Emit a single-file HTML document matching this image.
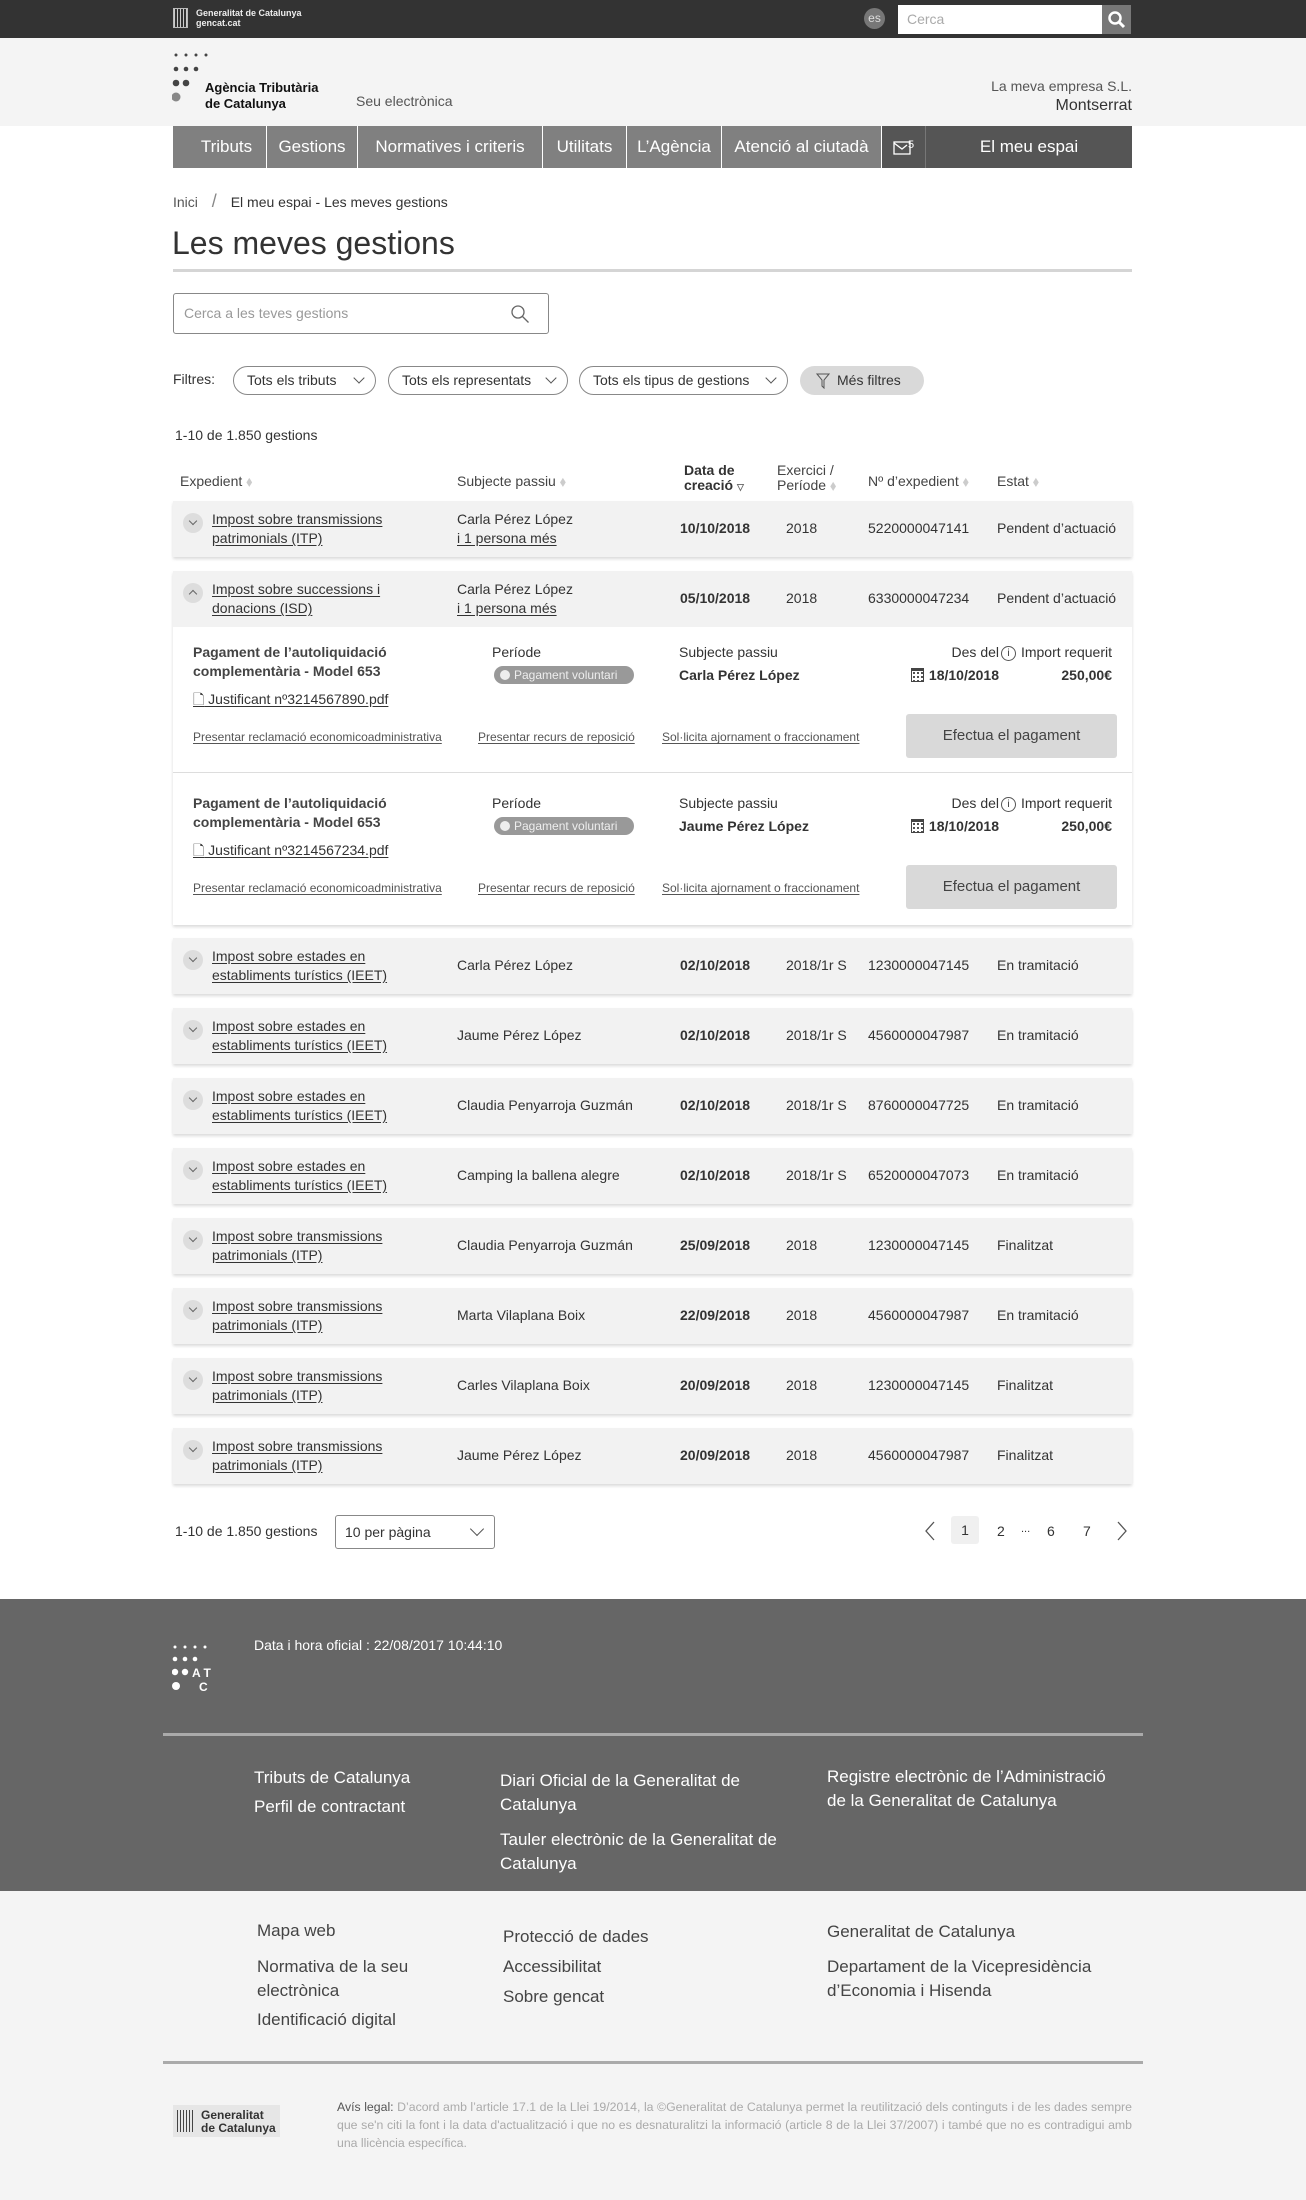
<!DOCTYPE html>
<html><head><meta charset="utf-8"><style>
*{box-sizing:border-box;margin:0;padding:0}
body{width:1306px;height:2200px;font-family:"Liberation Sans",sans-serif;color:#333;background:#fff;position:relative;overflow:hidden;font-size:14px}
.abs{position:absolute}
.top{left:0;top:0;width:1306px;height:38px;background:#333}
.hdr{left:0;top:38px;width:1306px;height:88px;background:#f4f4f4}
.nav{left:173px;top:126px;width:959px;height:42px;background:#808080;color:#fff;font-size:17px}
.nav div{position:absolute;top:0;border-right:1px solid #fff;height:42px;line-height:42px;text-align:center}
.u{text-decoration:underline;text-underline-offset:2px}
.row{position:absolute;left:173px;width:959px;height:56px;background:#f2f2f2;box-shadow:0 2px 3px rgba(0,0,0,.15);font-size:14px}
.row .c{position:absolute}
.chev{position:absolute;left:10px;top:12px;width:20px;height:20px;border-radius:50%;background:#ddd}
.chev:after{content:"";position:absolute;left:7px;top:5px;width:5px;height:5px;border-right:1px solid #666;border-bottom:1px solid #666;transform:rotate(45deg)}
.chev.up:after{top:8px;transform:rotate(-135deg)}
.pill{position:absolute;top:366px;height:29px;border:1px solid #888;border-radius:15px;font-size:14px;line-height:27px;padding:0 30px 0 13px}
.pill:after{content:"";position:absolute;right:12px;top:7px;width:7px;height:7px;border-right:1px solid #555;border-bottom:1px solid #555;transform:rotate(45deg)}
.th{position:absolute;font-size:14px;color:#444}
.det{position:absolute;left:173px;width:959px;background:#fff}
.btn{position:absolute;left:733px;width:211px;height:44px;background:#d9d9d9;border-radius:3px;text-align:center;line-height:44px;font-size:15px;color:#444}
.small{font-size:12px;color:#555}
.fl{color:#fff;font-size:17px;line-height:24px}
.ll{color:#444;font-size:17px;line-height:24px}
.cal{display:inline-block;width:13px;height:14px;border:1.3px solid #444;border-top-width:3px;margin-right:5px;vertical-align:-2px;background:radial-gradient(circle,#444 1px,transparent 1.2px) 0 0/4px 4px}
.info{display:inline-block;width:15px;height:15px;border:1px solid #555;border-radius:50%;font-size:10px;line-height:13px;text-align:center;margin-right:5px;vertical-align:1px}
</style></head><body>
<div class="abs top">
 <div class="abs" style="left:173px;top:8px;width:15px;height:20px;border:1px solid #bbb;background:repeating-linear-gradient(90deg,#ccc 0 1px,#333 1px 3px)"></div>
 <div class="abs" style="left:196px;top:8px;color:#eee;font-size:9px;line-height:10px;font-weight:bold">Generalitat de Catalunya<br>gencat.cat</div>
 <div class="abs" style="left:864px;top:8px;width:21px;height:21px;border-radius:50%;background:#777;color:#ddd;font-size:12px;text-align:center;line-height:21px">es</div>
 <div class="abs" style="left:898px;top:5px;width:204px;height:29px;background:#fff;color:#aaa;font-size:14px;line-height:29px;padding-left:9px">Cerca</div>
 <div class="abs" style="left:1102px;top:5px;width:29px;height:29px;background:#777"><svg width="29" height="29"><circle cx="13" cy="13" r="5.5" stroke="#fff" stroke-width="2.5" fill="none"/><path d="M17 17l5 5" stroke="#fff" stroke-width="3"/></svg></div>
</div>
<div class="abs hdr">
 <svg class="abs" style="left:172px;top:14px" width="40" height="60"><g fill="#444"><circle cx="4" cy="3" r="1.5"/><circle cx="14" cy="3" r="1.5"/><circle cx="24" cy="3" r="1.5"/><circle cx="34" cy="3" r="1.5"/><circle cx="4" cy="17" r="2.3"/><circle cx="14" cy="17" r="2.3"/><circle cx="24" cy="17" r="2.3"/><circle cx="4" cy="31" r="3.3"/><circle cx="14" cy="31" r="3.3"/><circle cx="4" cy="45" r="4.5" fill="#888"/></g></svg>
 <div class="abs" style="left:205px;top:42px;font-size:13px;font-weight:bold;line-height:16px;color:#111">Agència Tributària<br>de Catalunya</div>
 <div class="abs" style="left:356px;top:55px;font-size:14px;color:#555">Seu electrònica</div>
 <div class="abs" style="right:174px;top:39px;font-size:14px;color:#555;text-align:right;line-height:19px">La meva empresa S.L.<br><span style="font-size:16px;color:#333">Montserrat</span></div>
</div>
<div class="abs nav">
 <div style="left:0;width:94px;padding-left:14px">Tributs</div>
 <div style="left:94px;width:91px">Gestions</div>
 <div style="left:185px;width:185px">Normatives i criteris</div>
 <div style="left:370px;width:84px">Utilitats</div>
 <div style="left:454px;width:95px">L’Agència</div>
 <div style="left:549px;width:160px">Atenció al ciutadà</div>
 <div style="left:709px;width:44px;background:#555;border-right:1px solid #777"><svg style="position:absolute;left:11px;top:12px" width="24" height="18"><rect x="1" y="4" width="16" height="12" fill="none" stroke="#fff" stroke-width="1.3"/><path d="M1 5l8 6 5-4" stroke="#fff" fill="none" stroke-width="1.3"/><text x="15" y="10" fill="#fff" font-size="11" font-family="Liberation Sans">5</text></svg></div>
 <div style="left:753px;width:206px;background:#555;border:none">El meu espai</div>
</div>
<div class="abs" style="left:173px;top:191px;font-size:14px;color:#555">Inici <span style="margin:0 10px;font-size:18px;color:#888">/</span> <span style="color:#333">El meu espai - Les meves gestions</span></div>
<div class="abs" style="left:172px;top:225px;font-size:32px;color:#333">Les meves gestions</div>
<div class="abs" style="left:173px;top:269px;width:959px;height:3px;background:#d5d5d5"></div>
<div class="abs" style="left:173px;top:293px;width:376px;height:41px;border:1px solid #888;border-radius:3px;color:#999;font-size:14px;line-height:39px;padding-left:10px">Cerca a les teves gestions
 <svg style="position:absolute;right:18px;top:10px" width="20" height="20"><circle cx="8" cy="8" r="6" stroke="#666" fill="none" stroke-width="1.3"/><path d="M12.5 12.5l6 6" stroke="#666" stroke-width="1.3"/></svg></div>
<div class="abs" style="left:173px;top:371px;font-size:14px">Filtres:</div>
<div class="pill" style="left:233px;width:143px">Tots els tributs</div>
<div class="pill" style="left:388px;width:180px">Tots els representats</div>
<div class="pill" style="left:579px;width:209px">Tots els tipus de gestions</div>
<div class="abs" style="left:800px;top:366px;width:124px;height:29px;border-radius:15px;background:#d9d9d9;font-size:14px;line-height:29px;padding-left:37px">Més filtres<svg style="position:absolute;left:16px;top:7px" width="14" height="16"><path d="M1 1h12l-5 6v8l-2-2V7z" fill="none" stroke="#555"/></svg></div>
<div class="abs" style="left:175px;top:427px;font-size:14px">1-10 de 1.850 gestions</div>

<div class="th" style="left:180px;top:473px">Expedient <span style="color:#ccc">⬧</span></div>
<div class="th" style="left:457px;top:473px">Subjecte passiu <span style="color:#ccc">⬧</span></div>
<div class="th" style="left:684px;top:463px;font-weight:bold;color:#333;line-height:15px">Data de<br>creació <span style="font-size:9px;color:#666">▽</span></div>
<div class="th" style="left:777px;top:463px;line-height:15px">Exercici /<br>Període <span style="color:#ccc">⬧</span></div>
<div class="th" style="left:868px;top:473px">Nº d’expedient <span style="color:#ccc">⬧</span></div>
<div class="th" style="left:997px;top:473px">Estat <span style="color:#ccc">⬧</span></div>

<div class="row" style="top:501px"><div class="chev"></div>
 <div class="c u" style="left:39px;top:9px;line-height:19px">Impost sobre transmissions<br>patrimonials (ITP)</div>
 <div class="c" style="left:284px;top:9px;line-height:19px">Carla Pérez López<br><span class="u">i 1 persona més</span></div>
 <div class="c" style="left:507px;top:19px;font-weight:bold">10/10/2018</div><div class="c" style="left:613px;top:19px">2018</div><div class="c" style="left:695px;top:19px">5220000047141</div><div class="c" style="left:824px;top:19px">Pendent d’actuació</div></div>

<div class="abs" style="left:173px;top:571px;width:959px;height:354px;box-shadow:0 2px 3px rgba(0,0,0,.15);background:#fff"></div>
<div class="row" style="top:571px;box-shadow:none"><div class="chev up"></div>
 <div class="c u" style="left:39px;top:9px;line-height:19px">Impost sobre successions i<br>donacions (ISD)</div>
 <div class="c" style="left:284px;top:9px;line-height:19px">Carla Pérez López<br><span class="u">i 1 persona més</span></div>
 <div class="c" style="left:507px;top:19px;font-weight:bold">05/10/2018</div><div class="c" style="left:613px;top:19px">2018</div><div class="c" style="left:695px;top:19px">6330000047234</div><div class="c" style="left:824px;top:19px">Pendent d’actuació</div></div>

<div class="det" style="top:627px;height:146px;border-bottom:1px solid #ddd">
 <div class="abs" style="left:20px;top:16px;font-weight:bold;font-size:14px;line-height:19px;color:#444">Pagament de l’autoliquidació<br>complementària - Model 653</div>
 <div class="abs u" style="left:20px;top:62px;font-size:14px"><span style="text-decoration:none">🗋</span> Justificant nº3214567890.pdf</div>
 <div class="abs" style="left:319px;top:17px">Període</div>
 <div class="abs" style="left:321px;top:39px;height:18px;width:140px;border-radius:9px;background:#999;color:#eee;font-size:12px;line-height:18px;padding-left:20px">Pagament voluntari<span style="position:absolute;left:6px;top:4px;width:10px;height:10px;border-radius:50%;background:#eee"></span></div>
 <div class="abs" style="left:506px;top:17px">Subjecte passiu</div>
 <div class="abs" style="left:506px;top:40px;font-weight:bold">Carla Pérez López</div>
 <div class="abs" style="right:133px;top:17px">Des del</div>
 <div class="abs" style="right:133px;top:40px;font-weight:bold"><span class="cal"></span>18/10/2018</div>
 <div class="abs" style="right:20px;top:17px"><span class="info">i</span>Import requerit</div>
 <div class="abs" style="right:20px;top:40px;font-weight:bold">250,00€</div>
 <div class="abs small u" style="left:20px;top:103px">Presentar reclamació economicoadministrativa</div>
 <div class="abs small u" style="left:305px;top:103px">Presentar recurs de reposició</div>
 <div class="abs small u" style="left:489px;top:103px">Sol·licita ajornament o fraccionament</div>
 <div class="btn" style="top:87px">Efectua el pagament</div>
</div>
<div class="det" style="top:774px;height:151px">
 <div class="abs" style="left:20px;top:20px;font-weight:bold;font-size:14px;line-height:19px;color:#444">Pagament de l’autoliquidació<br>complementària - Model 653</div>
 <div class="abs u" style="left:20px;top:66px;font-size:14px"><span style="text-decoration:none">🗋</span> Justificant nº3214567234.pdf</div>
 <div class="abs" style="left:319px;top:21px">Període</div>
 <div class="abs" style="left:321px;top:43px;height:18px;width:140px;border-radius:9px;background:#999;color:#eee;font-size:12px;line-height:18px;padding-left:20px">Pagament voluntari<span style="position:absolute;left:6px;top:4px;width:10px;height:10px;border-radius:50%;background:#eee"></span></div>
 <div class="abs" style="left:506px;top:21px">Subjecte passiu</div>
 <div class="abs" style="left:506px;top:44px;font-weight:bold">Jaume Pérez López</div>
 <div class="abs" style="right:133px;top:21px">Des del</div>
 <div class="abs" style="right:133px;top:44px;font-weight:bold"><span class="cal"></span>18/10/2018</div>
 <div class="abs" style="right:20px;top:21px"><span class="info">i</span>Import requerit</div>
 <div class="abs" style="right:20px;top:44px;font-weight:bold">250,00€</div>
 <div class="abs small u" style="left:20px;top:107px">Presentar reclamació economicoadministrativa</div>
 <div class="abs small u" style="left:305px;top:107px">Presentar recurs de reposició</div>
 <div class="abs small u" style="left:489px;top:107px">Sol·licita ajornament o fraccionament</div>
 <div class="btn" style="top:91px">Efectua el pagament</div>
</div>

<div class="row" style="top:938px"><div class="chev"></div><div class="c u" style="left:39px;top:9px;line-height:19px">Impost sobre estades en<br>establiments turístics (IEET)</div><div class="c" style="left:284px;top:19px">Carla Pérez López</div><div class="c" style="left:507px;top:19px;font-weight:bold">02/10/2018</div><div class="c" style="left:613px;top:19px">2018/1r S</div><div class="c" style="left:695px;top:19px">1230000047145</div><div class="c" style="left:824px;top:19px">En tramitació</div></div>
<div class="row" style="top:1008px"><div class="chev"></div><div class="c u" style="left:39px;top:9px;line-height:19px">Impost sobre estades en<br>establiments turístics (IEET)</div><div class="c" style="left:284px;top:19px">Jaume Pérez López</div><div class="c" style="left:507px;top:19px;font-weight:bold">02/10/2018</div><div class="c" style="left:613px;top:19px">2018/1r S</div><div class="c" style="left:695px;top:19px">4560000047987</div><div class="c" style="left:824px;top:19px">En tramitació</div></div>
<div class="row" style="top:1078px"><div class="chev"></div><div class="c u" style="left:39px;top:9px;line-height:19px">Impost sobre estades en<br>establiments turístics (IEET)</div><div class="c" style="left:284px;top:19px">Claudia Penyarroja Guzmán</div><div class="c" style="left:507px;top:19px;font-weight:bold">02/10/2018</div><div class="c" style="left:613px;top:19px">2018/1r S</div><div class="c" style="left:695px;top:19px">8760000047725</div><div class="c" style="left:824px;top:19px">En tramitació</div></div>
<div class="row" style="top:1148px"><div class="chev"></div><div class="c u" style="left:39px;top:9px;line-height:19px">Impost sobre estades en<br>establiments turístics (IEET)</div><div class="c" style="left:284px;top:19px">Camping la ballena alegre</div><div class="c" style="left:507px;top:19px;font-weight:bold">02/10/2018</div><div class="c" style="left:613px;top:19px">2018/1r S</div><div class="c" style="left:695px;top:19px">6520000047073</div><div class="c" style="left:824px;top:19px">En tramitació</div></div>
<div class="row" style="top:1218px"><div class="chev"></div><div class="c u" style="left:39px;top:9px;line-height:19px">Impost sobre transmissions<br>patrimonials (ITP)</div><div class="c" style="left:284px;top:19px">Claudia Penyarroja Guzmán</div><div class="c" style="left:507px;top:19px;font-weight:bold">25/09/2018</div><div class="c" style="left:613px;top:19px">2018</div><div class="c" style="left:695px;top:19px">1230000047145</div><div class="c" style="left:824px;top:19px">Finalitzat</div></div>
<div class="row" style="top:1288px"><div class="chev"></div><div class="c u" style="left:39px;top:9px;line-height:19px">Impost sobre transmissions<br>patrimonials (ITP)</div><div class="c" style="left:284px;top:19px">Marta Vilaplana Boix</div><div class="c" style="left:507px;top:19px;font-weight:bold">22/09/2018</div><div class="c" style="left:613px;top:19px">2018</div><div class="c" style="left:695px;top:19px">4560000047987</div><div class="c" style="left:824px;top:19px">En tramitació</div></div>
<div class="row" style="top:1358px"><div class="chev"></div><div class="c u" style="left:39px;top:9px;line-height:19px">Impost sobre transmissions<br>patrimonials (ITP)</div><div class="c" style="left:284px;top:19px">Carles Vilaplana Boix</div><div class="c" style="left:507px;top:19px;font-weight:bold">20/09/2018</div><div class="c" style="left:613px;top:19px">2018</div><div class="c" style="left:695px;top:19px">1230000047145</div><div class="c" style="left:824px;top:19px">Finalitzat</div></div>
<div class="row" style="top:1428px"><div class="chev"></div><div class="c u" style="left:39px;top:9px;line-height:19px">Impost sobre transmissions<br>patrimonials (ITP)</div><div class="c" style="left:284px;top:19px">Jaume Pérez López</div><div class="c" style="left:507px;top:19px;font-weight:bold">20/09/2018</div><div class="c" style="left:613px;top:19px">2018</div><div class="c" style="left:695px;top:19px">4560000047987</div><div class="c" style="left:824px;top:19px">Finalitzat</div></div>

<div class="abs" style="left:175px;top:1523px">1-10 de 1.850 gestions</div>
<div class="abs" style="left:335px;top:1515px;width:160px;height:34px;border:1px solid #888;border-radius:3px;line-height:32px;padding-left:9px">10 per pàgina<span style="position:absolute;right:12px;top:8px;width:10px;height:10px;border-right:1px solid #555;border-bottom:1px solid #555;transform:rotate(45deg)"></span></div>
<svg class="abs" style="left:924px;top:1521px" width="12" height="20"><path d="M10 1L2 10l8 9" fill="none" stroke="#555" stroke-width="1.3"/></svg>
<div class="abs" style="left:951px;top:1516px;width:28px;height:28px;background:#f0f0f0;border-radius:3px;text-align:center;line-height:28px">1</div>
<div class="abs" style="left:997px;top:1523px">2</div><div class="abs" style="left:1021px;top:1523px;font-size:11px">...</div>
<div class="abs" style="left:1047px;top:1523px">6</div><div class="abs" style="left:1083px;top:1523px">7</div>
<svg class="abs" style="left:1116px;top:1521px" width="12" height="20"><path d="M2 1l8 9-8 9" fill="none" stroke="#555" stroke-width="1.3"/></svg>

<div class="abs" style="left:0;top:1599px;width:1306px;height:292px;background:#666"></div>
<svg class="abs" style="left:172px;top:1644px" width="60" height="60"><g fill="#fff"><circle cx="3" cy="3" r="1.5"/><circle cx="13" cy="3" r="1.5"/><circle cx="23" cy="3" r="1.5"/><circle cx="33" cy="3" r="1.5"/><circle cx="3" cy="15" r="2.3"/><circle cx="13" cy="15" r="2.3"/><circle cx="23" cy="15" r="2.3"/><circle cx="3" cy="28" r="3.2"/><circle cx="13" cy="28" r="3.2"/><circle cx="4" cy="42" r="4"/><text x="20" y="33" font-size="12" font-weight="bold" font-family="Liberation Sans">A T</text><text x="27" y="47" font-size="12" font-weight="bold" font-family="Liberation Sans">C</text></g></svg>
<div class="abs" style="left:254px;top:1637px;color:#fff;font-size:14px">Data i hora oficial : 22/08/2017 10:44:10</div>
<div class="abs" style="left:163px;top:1733px;width:980px;height:3px;background:#aaa"></div>
<div class="abs fl" style="left:254px;top:1763px;line-height:29px">Tributs de Catalunya<br>Perfil de contractant</div>
<div class="abs fl" style="left:500px;top:1769px">Diari Oficial de la Generalitat de<br>Catalunya</div>
<div class="abs fl" style="left:500px;top:1828px">Tauler electrònic de la Generalitat de<br>Catalunya</div>
<div class="abs fl" style="left:827px;top:1765px">Registre electrònic de l’Administració<br>de la Generalitat de Catalunya</div>
<div class="abs" style="left:0;top:1891px;width:1306px;height:309px;background:#f4f4f4"></div>
<div class="abs ll" style="left:257px;top:1919px">Mapa web</div>
<div class="abs ll" style="left:257px;top:1955px">Normativa de la seu<br>electrònica</div>
<div class="abs ll" style="left:257px;top:2008px">Identificació digital</div>
<div class="abs ll" style="left:503px;top:1925px">Protecció de dades</div>
<div class="abs ll" style="left:503px;top:1955px">Accessibilitat</div>
<div class="abs ll" style="left:503px;top:1985px">Sobre gencat</div>
<div class="abs ll" style="left:827px;top:1920px">Generalitat de Catalunya</div>
<div class="abs ll" style="left:827px;top:1955px">Departament de la Vicepresidència<br>d’Economia i Hisenda</div>
<div class="abs" style="left:163px;top:2061px;width:980px;height:3px;background:#aaa"></div>
<div class="abs" style="left:173px;top:2105px;width:107px;height:32px;background:#e6e6e6"><div class="abs" style="left:4px;top:5px;width:16px;height:22px;background:repeating-linear-gradient(90deg,#444 0 1px,#e6e6e6 1px 3px)"></div><div class="abs" style="left:28px;top:4px;font-size:12px;font-weight:bold;line-height:13px;color:#333">Generalitat<br>de Catalunya</div></div>
<div class="abs" style="left:337px;top:2098px;width:795px;font-size:12.3px;line-height:18px;color:#aaa;text-align:justify"><span style="color:#555">Avís legal:</span> D’acord amb l’article 17.1 de la Llei 19/2014, la ©Generalitat de Catalunya permet la reutilització dels continguts i de les dades sempre que se'n citi la font i la data d'actualització i que no es desnaturalitzi la informació (article 8 de la Llei 37/2007) i també que no es contradigui amb una llicència específica.</div>
</body></html>
